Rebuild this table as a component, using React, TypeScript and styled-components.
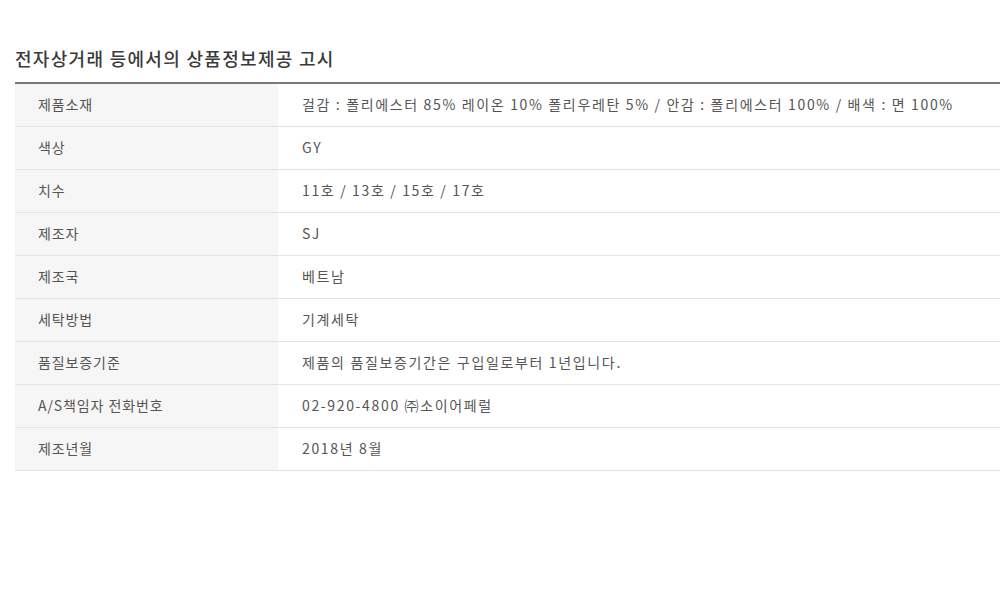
import React from "react";
import styled, { createGlobalStyle } from "styled-components";

const Global = createGlobalStyle`
  html, body { margin: 0; padding: 0; background: #fff; }
  body { font-family: "Noto Sans CJK KR", "Noto Sans", sans-serif; }
`;

const Page = styled.div`
  padding: 46px 0 0 15px;
  width: 1000px;
  box-sizing: border-box;
`;

const Title = styled.h2`
  margin: 0 0 12px 0;
  font-size: 18px;
  font-weight: 500;
  color: #3a3a3a;
  line-height: 24px;
  letter-spacing: 1.3px;
`;

const Table = styled.div`
  border-top: 2px solid #7a7a7a;
  display: grid;
  grid-template-columns: 263px 1fr;
`;

const Head = styled.div`
  height: 39px;
  padding: 0 0 3px 23px;
  border-bottom: 1px solid #e3e3e3;
  background: #f6f6f6;
  display: flex;
  align-items: center;
  font-size: 14px;
  letter-spacing: 0.9px;
  color: #555;
  white-space: nowrap;
`;

const Cell = styled.div`
  height: 39px;
  padding: 0 0 3px 24px;
  border-bottom: 1px solid #e3e3e3;
  background: #fff;
  display: flex;
  align-items: center;
  font-size: 14px;
  letter-spacing: 1.65px;
  color: #555;
  white-space: nowrap;
`;

const rows: [string, string][] = [
  ["제품소재", "걸감 : 폴리에스터 85% 레이온 10% 폴리우레탄 5% / 안감 : 폴리에스터 100% / 배색 : 면 100%"],
  ["색상", "GY"],
  ["치수", "11호 / 13호 / 15호 / 17호"],
  ["제조자", "SJ"],
  ["제조국", "베트남"],
  ["세탁방법", "기계세탁"],
  ["품질보증기준", "제품의 품질보증기간은 구입일로부터 1년입니다."],
  ["A/S책임자 전화번호", "02-920-4800 ㈜소이어페럴"],
  ["제조년월", "2018년 8월"],
];

export default function App() {
  return (
    <>
      <Global />
      <Page>
        <Title>전자상거래 등에서의 상품정보제공 고시</Title>
        <Table>
          {rows.map(([k, v]) => (
            <React.Fragment key={k}>
              <Head>{k}</Head>
              <Cell>{v}</Cell>
            </React.Fragment>
          ))}
        </Table>
      </Page>
    </>
  );
}
